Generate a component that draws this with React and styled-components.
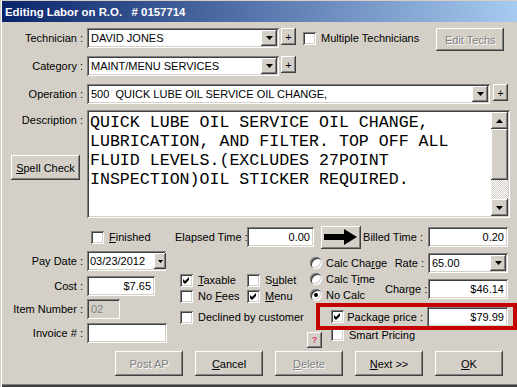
import React from 'react';
import styled, { createGlobalStyle } from 'styled-components';

const GlobalStyle = createGlobalStyle`
  * { box-sizing: border-box; }
  html, body { margin: 0; padding: 0; background: #d4d0c8; }
  body { font-family: "Liberation Sans", Arial, sans-serif; font-size: 11px; color: #000; }
`;

const raised = `box-shadow: inset -1px -1px 0 #404040, inset 1px 1px 0 #ffffff, inset -2px -2px 0 #808080, inset 2px 2px 0 #d4d0c8;`;
const sunken = `box-shadow: inset 1px 1px 0 #808080, inset -1px -1px 0 #ffffff, inset 2px 2px 0 #404040, inset -2px -2px 0 #d4d0c8;`;

const Window = styled.div`
  width: 517px;
  height: 387px;
  background: #d4d0c8;
  display: flex;
  flex-direction: column;
  overflow: hidden;
  box-shadow: inset 1px 0 0 #d4d0c8, inset 2px 0 0 #ffffff, inset 0 -1px 0 #404040, inset 0 -2px 0 #404040, inset 0 -3px 0 #808080;
`;

const TitleBar = styled.div`
  height: 21px;
  margin: 1px 0 0 2px;
  padding-left: 3px;
  display: flex;
  align-items: center;
  background: linear-gradient(to right, #0a246a, #a6caf0);
  color: #fff;
  font-weight: bold;
  font-size: 11.4px;
  white-space: pre;
  flex-shrink: 0;
`;

const Row = styled.div`
  display: flex;
  align-items: ${p => p.$align || 'center'};
  height: ${p => p.$h || 20}px;
  margin-top: ${p => p.$mt || 0}px;
  flex-shrink: 0;
`;

const Label = styled.div`
  width: ${p => p.$w || 87}px;
  padding-right: ${p => p.$pr ?? 4}px;
  text-align: right;
  white-space: nowrap;
  flex-shrink: 0;
`;

const Field = styled.div`
  width: ${p => p.$w}px;
  height: ${p => p.$h || 20}px;
  background: ${p => (p.$disabled ? '#d4d0c8' : '#ffffff')};
  color: ${p => (p.$disabled ? '#808080' : '#000000')};
  ${sunken}
  display: flex;
  align-items: center;
  justify-content: ${p => (p.$right ? 'flex-end' : 'flex-start')};
  padding: 0 4px 0 4px;
  margin-left: ${p => p.$ml || 0}px;
  flex-shrink: 0;
  white-space: nowrap;
  overflow: hidden;
`;

const ComboText = styled.span`
  flex: 1;
  overflow: hidden;
  white-space: pre;
`;

const DropBtn = styled.span`
  width: ${p => p.$w || 16}px;
  height: ${p => p.$h || 16}px;
  margin-right: -2px;
  background: #d4d0c8;
  ${raised}
  display: flex;
  align-items: center;
  justify-content: center;
  flex-shrink: 0;
`;

const PlusBtn = styled.span`
  width: 15px;
  height: 17px;
  margin-left: ${p => p.$ml || 2}px;
  background: #d4d0c8;
  ${raised}
  display: flex;
  align-items: center;
  justify-content: center;
  flex-shrink: 0;
  font-size: 11px;
`;

const Button = styled.button`
  width: ${p => p.$w || 68}px;
  height: ${p => p.$h || 25}px;
  margin-left: ${p => p.$ml || 0}px;
  margin-top: ${p => p.$mt || 0}px;
  padding: 0;
  border: none;
  background: #d4d0c8;
  ${raised}
  font-family: inherit;
  font-size: 11px;
  color: #000;
  flex-shrink: 0;
  display: flex;
  align-items: center;
  justify-content: center;

  &:disabled {
    color: #808080;
    text-shadow: 1px 1px 0 #ffffff;
  }
`;

const CheckItem = styled.div`
  display: flex;
  align-items: center;
  gap: ${p => p.$gap ?? 5}px;
  height: ${p => p.$h || 16}px;
  margin-left: ${p => p.$ml || 0}px;
  margin-top: ${p => p.$mt || 0}px;
  white-space: nowrap;
  flex-shrink: 0;
`;

const Box = styled.span`
  width: 13px;
  height: 13px;
  background: #fff;
  ${sunken}
  display: inline-flex;
  align-items: center;
  justify-content: center;
  flex-shrink: 0;
`;

const RadioDot = styled.span`
  width: 12px;
  height: 12px;
  border-radius: 50%;
  background: #fff;
  box-shadow: inset 1px 1px 0 #808080, inset -1px -1px 0 #ffffff, inset 2px 2px 0 #404040, inset -2px -2px 0 #d4d0c8;
  display: inline-flex;
  align-items: center;
  justify-content: center;
  flex-shrink: 0;

  &::after {
    content: '';
    width: 4px;
    height: 4px;
    border-radius: 50%;
    background: ${p => (p.$on ? '#000' : 'transparent')};
  }
`;

const DescArea = styled.div`
  width: 423px;
  height: 108px;
  background: #fff;
  ${sunken}
  padding: 2px;
  display: flex;
`;

const DescText = styled.div`
  flex: 1;
  padding: 1px 0 0 1px;
  font-family: "Liberation Mono", "Courier New", monospace;
  font-size: 16.6px;
  line-height: 19px;
`;

const ScrollBar = styled.div`
  width: 17px;
  display: flex;
  flex-direction: column;
  background: repeating-conic-gradient(#ffffff 0 25%, #d4d0c8 0 50%) 0 0 / 2px 2px;
`;

const ScrollPart = styled.div`
  height: ${p => p.$h}px;
  background: #d4d0c8;
  ${raised}
  display: flex;
  align-items: center;
  justify-content: center;
  flex-shrink: 0;
`;

const LeftPane = styled.div`
  width: 87px;
  display: flex;
  flex-direction: column;
  flex-shrink: 0;
`;

const Lower = styled.div`
  display: flex;
  height: 97px;
  margin-top: 3px;
  flex-shrink: 0;
`;

const Column = styled.div`
  width: ${p => (p.$w ? `${p.$w}px` : 'auto')};
  flex: ${p => (p.$w ? '0 0 auto' : '1')};
  padding-top: ${p => p.$pt || 0}px;
  padding-left: ${p => p.$pl || 0}px;
  display: flex;
  flex-direction: column;
`;

const CheckGrid = styled.div`
  display: grid;
  grid-template-columns: 67px auto;
  grid-auto-rows: 16px;
`;

const TopPart = styled.div`
  display: flex;
  height: 52px;
`;

const Highlight = styled.div`
  position: relative;
  z-index: 1;
  width: 201px;
  height: 27px;
  margin-left: 11px;
  border: 4px solid #c40000;
  overflow: hidden;
  display: flex;
  align-items: flex-start;
  padding-left: 11px;
`;

const SmartRow = styled.div`
  display: flex;
  align-items: flex-start;
  margin-top: -7px;
  height: 23px;
`;

const HelpBtn = styled.span`
  width: 15px;
  height: 16px;
  margin: 9px 0 0 2px;
  background: #d4d0c8;
  ${raised}
  display: flex;
  align-items: center;
  justify-content: center;
  color: #e0407a;
  font-size: 9px;
  font-weight: bold;
  flex-shrink: 0;
`;

const ButtonRow = styled.div`
  display: flex;
  justify-content: flex-end;
  gap: 12px;
  padding-right: 14px;
  margin-top: 3px;
  flex-shrink: 0;
`;

const DownArrow = ({ w = 7, h = 4 }) => (
  <svg width={w} height={h} viewBox="0 0 7 4">
    <polygon points="0,0 7,0 3.5,4" fill="#000" />
  </svg>
);

const UpArrow = () => (
  <svg width="7" height="4" viewBox="0 0 7 4">
    <polygon points="0,4 7,4 3.5,0" fill="#000" />
  </svg>
);

const Check = ({ checked }) => (
  <Box>
    {checked && (
      <svg width="7" height="7" viewBox="0 0 7 7">
        <path d="M0 2 L2 4 L6 0 L6 3 L2 7 L0 5 Z" fill="#000" />
      </svg>
    )}
  </Box>
);

const Combo = ({ w, children, ml }) => (
  <Field $w={w} $ml={ml} style={{ paddingRight: 4 }}>
    <ComboText>{children}</ComboText>
    <DropBtn><DownArrow /></DropBtn>
  </Field>
);

function App() {
  return (
    <>
      <GlobalStyle />
      <Window>
        <TitleBar>{'Editing Labor on R.O.   # 0157714'}</TitleBar>

        <Row $mt={6} $align="flex-start">
          <Label style={{ lineHeight: '20px' }}>Technician :</Label>
          <Combo w={192}>DAVID JONES</Combo>
          <PlusBtn>+</PlusBtn>
          <CheckItem $ml={7} $h={20}>
            <Check />
            <span>Multiple Technicians</span>
          </CheckItem>
          <Button $ml={17} $h={23} disabled>Edit Techs</Button>
        </Row>

        <Row $mt={8} $align="flex-start">
          <Label style={{ lineHeight: '20px' }}>Category :</Label>
          <Combo w={192}>MAINT/MENU SERVICES</Combo>
          <PlusBtn>+</PlusBtn>
        </Row>

        <Row $mt={8} $align="flex-start">
          <Label style={{ lineHeight: '20px' }}>Operation :</Label>
          <Combo w={403}>{'500  QUICK LUBE OIL SERVICE OIL CHANGE,'}</Combo>
          <PlusBtn $ml={3}>+</PlusBtn>
        </Row>

        <Row $mt={6} $h={108} $align="flex-start">
          <LeftPane>
            <Label style={{ lineHeight: '20px' }}>Description :</Label>
            <Button $w={69} $ml={11} $mt={25}><span><u>S</u>pell Check</span></Button>
          </LeftPane>
          <DescArea>
            <DescText>
              QUICK LUBE OIL SERVICE OIL CHANGE, LUBRICATION, AND FILTER. TOP OFF ALL FLUID LEVELS.(EXCLUDES 27POINT INSPECTION)OIL STICKER REQUIRED.
            </DescText>
            <ScrollBar>
              <ScrollPart $h={17}><UpArrow /></ScrollPart>
              <ScrollPart $h={51} />
              <div style={{ flex: 1 }} />
              <ScrollPart $h={17}><DownArrow /></ScrollPart>
            </ScrollBar>
          </DescArea>
        </Row>

        <Row $mt={8} $h={22}>
          <CheckItem $ml={91} style={{ width: 84 }}>
            <Check />
            <span><u>F</u>inished</span>
          </CheckItem>
          <Label $w={72} $pr={6}>Elapsed Time :</Label>
          <Field $w={67} $right>0.00</Field>
          <Button $w={40} $h={23} $ml={7}>
            <svg width="34" height="16" viewBox="0 0 34 16">
              <polygon points="0,5 20,5 20,0 33,8 20,16 20,11 0,11" fill="#000" />
            </svg>
          </Button>
          <Label $w={67} $pr={5}>Billed Time :</Label>
          <Field $w={80} $right>0.20</Field>
        </Row>

        <Lower>
          <Column $w={175}>
            <Row>
              <Label>Pay Date :</Label>
              <Field $w={79} style={{ paddingLeft: 3, paddingRight: 2 }}>
                <ComboText>03/23/2012</ComboText>
                <DropBtn $w={12} $h={16}><DownArrow w={5} h={3} /></DropBtn>
              </Field>
            </Row>
            <Row $mt={5}>
              <Label>Cost :</Label>
              <Field $w={68} $right>$7.65</Field>
            </Row>
            <Row $mt={3}>
              <Label>Item Number :</Label>
              <Field $w={33} $disabled>02</Field>
            </Row>
            <Row $mt={4}>
              <Label>Invoice # :</Label>
              <Field $w={80} />
            </Row>
          </Column>

          <Column $w={130} $pt={21} $pl={5}>
            <CheckGrid>
              <CheckItem><Check checked /><span><u>T</u>axable</span></CheckItem>
              <CheckItem><Check /><span>S<u>u</u>blet</span></CheckItem>
              <CheckItem><Check /><span>No <u>F</u>ees</span></CheckItem>
              <CheckItem><Check checked /><span><u>M</u>enu</span></CheckItem>
            </CheckGrid>
            <CheckItem $mt={5}><Check /><span>Declined by customer</span></CheckItem>
          </Column>

          <Column>
            <TopPart>
              <Column $w={80} $pt={4} $pl={5}>
                <CheckItem $gap={4}><RadioDot /><span>Calc Cha<u>r</u>ge</span></CheckItem>
                <CheckItem $gap={4}><RadioDot /><span>Calc T<u>i</u>me</span></CheckItem>
                <CheckItem $gap={4}><RadioDot $on /><span>No Calc</span></CheckItem>
              </Column>
              <Column $w={123}>
                <Row $mt={2}>
                  <Label $w={43}>Rate :</Label>
                  <Combo w={80}>65.00</Combo>
                </Row>
                <Row $mt={6}>
                  <Label $w={43}>Charge :</Label>
                  <Field $w={80} $right>$46.14</Field>
                </Row>
              </Column>
            </TopPart>

            <Highlight>
              <CheckItem $mt={3} $h={13}><Check checked /></CheckItem>
              <Label $w={84} $pr={4} style={{ lineHeight: '20px', marginLeft: -1 }}>Package price :</Label>
              <Field $w={81} $right>$79.99</Field>
            </Highlight>

            <SmartRow>
              <HelpBtn>?</HelpBtn>
              <CheckItem $ml={9} $mt={2} $h={19}><Check /><span>Smart Pricing</span></CheckItem>
            </SmartRow>
          </Column>
        </Lower>

        <ButtonRow>
          <Button disabled>Post AP</Button>
          <Button><span><u>C</u>ancel</span></Button>
          <Button disabled><span><u>D</u>elete</span></Button>
          <Button><span><u>N</u>ext &gt;&gt;</span></Button>
          <Button><span><u>O</u>K</span></Button>
        </ButtonRow>
      </Window>
    </>
  );
}

export default App;
